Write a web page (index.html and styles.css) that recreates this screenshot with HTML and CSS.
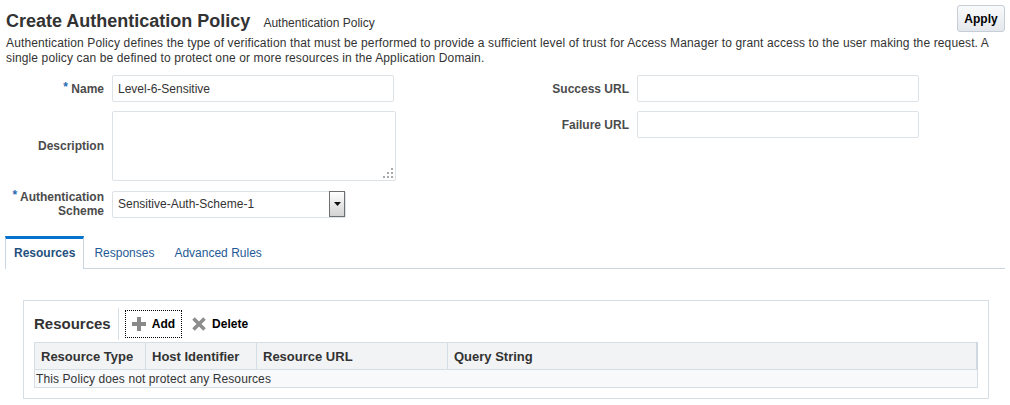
FILE: index.html
```html
<!DOCTYPE html>
<html lang="en">
<head>
<meta charset="utf-8">
<title>Create Authentication Policy</title>
<link rel="stylesheet" href="styles.css">
</head>
<body>
<div class="page">
  <header class="head">
    <div class="titles">
      <h1 class="title">Create Authentication Policy</h1>
      <span class="subtitle">Authentication Policy</span>
    </div>
    <button class="apply" type="button">Apply</button>
  </header>
  <p class="intro">Authentication Policy defines the type of verification that must be performed to provide a sufficient level of trust for Access Manager to grant access to the user making the request. A single policy can be defined to protect one or more resources in the Application Domain.</p>

  <div class="form">
    <div class="col col-left">
      <label class="lbl"><span class="req">*</span> Name</label>
      <input class="field" type="text" value="Level-6-Sensitive">

      <label class="lbl">Description</label>
      <div class="ta-wrap">
        <textarea class="ta"></textarea>
        <svg class="grip" width="12" height="11" viewBox="0 0 12 11"><g fill="#a9a9a9"><rect x="9" y="0" width="2" height="2"/><rect x="5" y="4" width="2" height="2"/><rect x="9" y="4" width="2" height="2"/><rect x="1" y="8" width="2" height="2"/><rect x="5" y="8" width="2" height="2"/><rect x="9" y="8" width="2" height="2"/></g></svg>
      </div>

      <label class="lbl lbl-two"><span class="req">*</span> Authentication<br>Scheme</label>
      <div class="select">
        <span class="select-text">Sensitive-Auth-Scheme-1</span>
        <span class="select-btn"><svg width="7" height="4" viewBox="0 0 7 4"><path d="M0 0H7L3.5 4Z" fill="#111"/></svg></span>
      </div>
    </div>

    <div class="col col-right">
      <label class="lbl">Success URL</label>
      <input class="field" type="text">
      <label class="lbl">Failure URL</label>
      <input class="field" type="text">
    </div>
  </div>

  <nav class="tabs">
    <a class="tab tab-active">Resources</a>
    <a class="tab">Responses</a>
    <a class="tab">Advanced Rules</a>
  </nav>

  <section class="panel">
    <div class="toolbar">
      <h2 class="panel-title">Resources</h2>
      <div class="tb-actions">
        <button class="tb-btn tb-focus" type="button">
          <svg width="14" height="14" viewBox="0 0 14 14"><path d="M5 0H9V5H14V9H9V14H5V9H0V5H5Z" fill="#8a8a8a"/></svg>
          <span>Add</span>
        </button>
        <button class="tb-btn" type="button">
          <svg width="14" height="14" viewBox="0 0 14 14"><path d="M1.5 1.5L12.5 12.5M12.5 1.5L1.5 12.5" stroke="#8d8d8d" stroke-width="3.6"/></svg>
          <span>Delete</span>
        </button>
      </div>
    </div>
    <table class="grid">
      <thead>
        <tr>
          <th class="c1">Resource Type</th>
          <th class="c2">Host Identifier</th>
          <th class="c3">Resource URL</th>
          <th class="c4">Query String</th>
        </tr>
      </thead>
      <tbody>
        <tr><td colspan="4">This Policy does not protect any Resources</td></tr>
      </tbody>
    </table>
  </section>
</div>
</body>
</html>
```

FILE: styles.css
```css
* { box-sizing: border-box; }

html, body {
  margin: 0;
  padding: 0;
  background: #fff;
}

body {
  font-family: "Liberation Sans", Arial, sans-serif;
  font-size: 12px;
  color: #333;
}

.page {
  padding: 0 5px 0 6px;
}

.head {
  display: flex;
  justify-content: space-between;
  align-items: flex-start;
}

.titles {
  margin-top: 11px;
  display: flex;
  align-items: baseline;
}

.title {
  margin: 0;
  font-size: 18px;
  line-height: 21px;
  font-weight: bold;
  color: #333;
}

.subtitle {
  margin-left: 13px;
  font-size: 12px;
  color: #333;
}

.apply {
  margin-top: 5px;
  width: 48px;
  height: 27px;
  padding: 0;
  border: 1px solid #c5ced6;
  border-radius: 3px;
  background: linear-gradient(#f9fafb, #e4e8ec);
  font-family: "Liberation Sans", Arial, sans-serif;
  font-size: 12px;
  font-weight: bold;
  color: #000;
}

.intro {
  margin: 4px 0 0;
  line-height: 15px;
  letter-spacing: 0.13px;
  color: #333;
}

.form {
  display: flex;
  align-items: flex-start;
  margin-top: 9px;
}

.col {
  display: grid;
  column-gap: 8px;
  row-gap: 9px;
  align-items: center;
}

.col-left {
  grid-template-columns: 98px 284px;
}

.col-right {
  margin-left: 113px;
  grid-template-columns: 120px 282px;
}

.lbl {
  text-align: right;
  font-weight: bold;
  color: #4b4b4b;
  line-height: 14px;
}

.req {
  color: #2a6bb0;
  position: relative;
  top: -2px;
}

.field {
  width: 282px;
  height: 27px;
  border: 1px solid #dde2e7;
  border-radius: 2px;
  padding: 0 5px;
  font-family: "Liberation Sans", Arial, sans-serif;
  font-size: 12px;
  color: #333;
  background: #fff;
}

.ta-wrap {
  position: relative;
  width: 284px;
  height: 70px;
}

.ta {
  display: block;
  width: 284px;
  height: 70px;
  border: 1px solid #dde2e7;
  border-radius: 2px;
  resize: none;
  background: #fff;
}

.grip {
  position: absolute;
  right: 2px;
  bottom: 2px;
}

.select {
  display: flex;
  align-items: stretch;
  width: 234px;
  height: 27px;
  border: 1px solid #dde2e7;
  border-radius: 2px;
  background: #fff;
}

.select-text {
  flex: 1;
  padding-left: 5px;
  line-height: 25px;
  color: #333;
}

.select-btn {
  width: 16px;
  border: 1px solid #6f6f6f;
  margin: -1px 0 0;
  height: 26px;
  background: linear-gradient(#ffffff, #d3d3d3);
  display: flex;
  align-items: center;
  justify-content: center;
}

.tabs {
  display: flex;
  margin: 18px 0 0 -1px;
  border-bottom: 1px solid #c9d5e0;
}

.tab {
  display: block;
  padding: 0 9px;
  line-height: 29px;
  border-top: 3px solid transparent;
  border-left: 1px solid transparent;
  border-right: 1px solid transparent;
  color: #1f5a96;
  font-size: 12px;
}

.tab-active {
  padding: 0 8px 1px;
  border-top-color: #0572ce;
  border-left-color: #c9d5e0;
  border-right-color: #c9d5e0;
  background: #fff;
  margin-bottom: -1px;
  font-weight: bold;
  color: #24507e;
}

.panel {
  margin: 31px 0 0 17px;
  width: 966px;
  border: 1px solid #d6dee5;
  padding: 7px 10px 10px 10px;
  background: #fff;
}

.toolbar {
  display: flex;
  align-items: center;
  height: 32px;
}

.panel-title {
  margin: 0;
  padding-right: 7px;
  font-size: 15px;
  font-weight: bold;
  color: #333;
  line-height: 32px;
}

.tb-actions {
  display: flex;
  align-items: center;
  height: 32px;
  border-left: 1px solid #d6dee5;
  padding-left: 6px;
  gap: 3px;
}

.tb-btn {
  display: flex;
  align-items: center;
  gap: 6px;
  height: 28px;
  padding: 0 6px;
  border: 1px solid transparent;
  background: transparent;
  font-family: "Liberation Sans", Arial, sans-serif;
  font-size: 12px;
  font-weight: bold;
  color: #000;
}

.tb-focus {
  border: 1px dotted #000;
}

.grid {
  width: 100%;
  margin-top: 2px;
  border-collapse: collapse;
  border: 1px solid #d6dee5;
}

.grid th {
  height: 27px;
  padding: 0 6px;
  text-align: left;
  font-size: 13px;
  font-weight: bold;
  color: #333;
  background: #f2f3f5;
  border-right: 1px solid #d6dee5;
  border-bottom: 1px solid #d6dee5;
}

.grid th.c4 {
  border-right: 2px solid #cfd8e0;
}

.c1 { width: 111px; }
.c2 { width: 111px; }
.c3 { width: 191px; }

.grid td {
  height: 18px;
  padding: 0 1px;
  background: #f7f9fb;
  color: #333;
  letter-spacing: 0.1px;
}
```
